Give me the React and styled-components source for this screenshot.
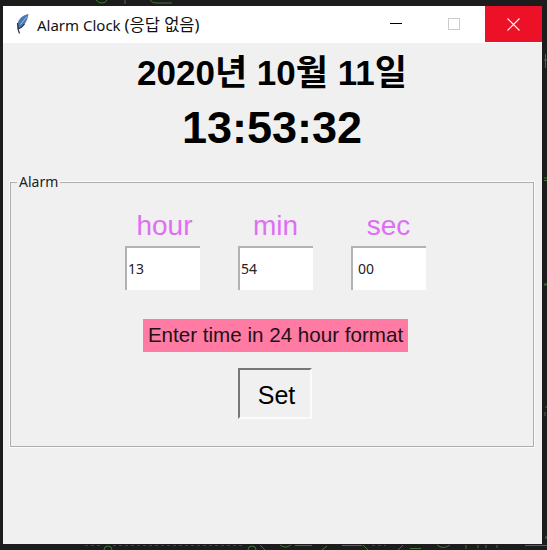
import React from "react";
import styled, { createGlobalStyle } from "styled-components";

const GlobalStyle = createGlobalStyle`
  html, body {
    margin: 0;
    padding: 0;
    background: #1c1c1c;
  }
`;

const sans = `"Liberation Sans", "Noto Sans CJK KR", sans-serif`;
const uiSans = `"Noto Sans", "Noto Sans CJK KR", sans-serif`;

const Desktop = styled.div`
  position: relative;
  width: 547px;
  height: 550px;
  box-sizing: border-box;
  padding: 6px 5px 6px 3px;
  background: #1c1c1c;
  overflow: hidden;
`;

// bits of the code editor showing round the window
const BehindCode = styled.svg`
  position: absolute;
  left: 0;
  top: 0;
  width: 547px;
  height: 550px;
`;

const Window = styled.div`
  position: relative;
  height: 538px;
  display: flex;
  flex-direction: column;
  background: #f0f0f0;
  font-family: ${sans};
`;

const TitleBar = styled.div`
  height: 37px;
  flex: none;
  display: flex;
  align-items: flex-start;
  background: #fff;
`;

const Feather = styled.svg`
  width: 16px;
  height: 20px;
  margin: 8px 0 0 13px;
  flex: none;
`;

const TitleText = styled.div`
  margin: 9px 0 0 5px;
  font-family: ${uiSans};
  font-size: 15px;
  line-height: 20px;
  color: #111;
  white-space: nowrap;
  flex: 1;
`;

const TitleStatus = styled.span`
  font-size: 16.5px;
`;

const WinButton = styled.div`
  width: ${(p) => p.$w}px;
  height: 36px;
  flex: none;
  display: flex;
  align-items: center;
  justify-content: center;
  background: ${(p) => (p.$close ? "#ec1126" : "transparent")};
`;

const Body = styled.div`
  flex: 1;
  display: flex;
  flex-direction: column;
  align-items: stretch;
  padding: 0 8px 0 7px;
`;

const DateLine = styled.div`
  height: 58px;
  line-height: 60px;
  font-size: 35px;
  font-weight: 700;
  color: #000;
  text-align: center;
  white-space: nowrap;
`;

const TimeLine = styled.div`
  height: 52px;
  line-height: 54px;
  font-size: 45px;
  font-weight: 700;
  color: #000;
  text-align: center;
`;

const AlarmBox = styled.fieldset`
  margin: 21px 0 0;
  padding: 0;
  height: 273px;
  box-sizing: border-box;
  border: 1px solid #adadad;
  box-shadow: 0 0 0 1px #fbfbfb;
  display: flex;
  flex-direction: column;
  align-items: center;
`;

const BoxTitle = styled.legend`
  margin-left: 6px;
  padding: 0 2px;
  font-family: ${uiSans};
  font-size: 14px;
  line-height: 16px;
  color: #222;
`;

const Fields = styled.div`
  display: flex;
  gap: 38px;
  margin-top: 18px;
  margin-left: 7px;
`;

const Field = styled.div`
  width: 75px;
  display: flex;
  flex-direction: column;
  align-items: center;
`;

const FieldLabel = styled.div`
  font-size: 28px;
  line-height: 36px;
  margin-bottom: 2px;
  color: #df6ff2;
  margin-left: ${(p) => p.$shift || 0}px;
`;

const TimeInput = styled.input`
  width: 75px;
  height: 44px;
  box-sizing: border-box;
  border: 0;
  border-top: 2px solid #b2b2b2;
  border-left: 2px solid #b2b2b2;
  outline: 0;
  background: #fff;
  padding: 0 0 2px ${(p) => p.$pad || 1}px;
  font-family: ${uiSans};
  font-size: 14px;
  color: #222;
`;

const Notice = styled.div`
  margin-top: 29px;
  margin-left: 7px;
  width: 265px;
  height: 33px;
  box-sizing: border-box;
  background: #ff7ba3;
  font-size: 20.6px;
  line-height: 31px;
  color: #231018;
  text-align: center;
  white-space: nowrap;
`;

const SetButton = styled.button`
  margin-top: 16px;
  margin-left: 5px;
  width: 74px;
  height: 51px;
  box-sizing: border-box;
  padding: 4px 0 0 4px;
  background: #f0f0f0;
  border: 2px solid;
  border-color: #777 #fbfbfb #fbfbfb #777;
  font-family: ${sans};
  font-size: 25px;
  color: #000;
`;

function App() {
  return (
    <Desktop>
      <GlobalStyle />
      <BehindCode viewBox="0 0 547 550">
        <g fill="none" stroke="#3f7534" strokeWidth="1">
          <path d="M96 0 Q98 3 102 3 Q106 3 107 0 M125 0 V4 M150 0 Q152 3 156 3 H172" />
          <path d="M104 550 Q104 546 108 546 Q112 546 112 550 M248 550 Q248 546 252 546 Q256 546 256 550 M260 545 L265 550 M280 545 Q285 549 291 545 M295 545.5 H312 M322 550 L327 546 M342 545.5 H362 M363 545 L368 550 M398 550 L403 545 M410 548.5 H421 M437 545 Q443 550 450 545 M466 545 V549 M478 545 V548 M486 545 V548 M497 545 V548 M525 545.5 H547" />
          <path d="M85 545.5 H100 M113 545.5 H245 M372 545.5 H386" strokeDasharray="3 3" opacity="0.6" />
          <path d="M545.5 54 V68 M544 60 H547 M544 178 H547 M544 180.5 H547 M544 284 H547 M544 285 H547 M545 407 H547 M545 412 V416 M545 537 H547 M545 538 H547" />
        </g>
      </BehindCode>
      <Window>
        <TitleBar>
          <Feather viewBox="0 0 16 20">
            <path d="M12.5 0 C7 1 2 5 1.5 10 L2 15 C7.5 14 11.5 7 12.5 0 Z" fill="#4c79ad" />
            <path d="M11 2.5 L4.5 10.5" stroke="#9cc0e6" strokeWidth="1" fill="none" />
            <path d="M1.5 9 L2 15 L3.5 19.5 M2 15 C5 14 7 12 8.5 10" stroke="#23303f" strokeWidth="1.2" fill="none" />
          </Feather>
          <TitleText>Alarm Clock <TitleStatus>(응답 없음)</TitleStatus></TitleText>
          <WinButton $w={54}>
            <svg width="12" height="2" viewBox="0 0 12 2">
              <rect width="12" height="1" fill="#000" />
            </svg>
          </WinButton>
          <WinButton $w={62}>
            <svg width="12" height="12" viewBox="0 0 12 12">
              <rect x="0.5" y="0.5" width="11" height="11" fill="none" stroke="#ccc" />
            </svg>
          </WinButton>
          <WinButton $w={57} $close>
            <svg width="13" height="13" viewBox="0 0 13 13">
              <path d="M0.5 0.5 L12.5 12.5 M12.5 0.5 L0.5 12.5" stroke="#fff" strokeWidth="1.1" />
            </svg>
          </WinButton>
        </TitleBar>
        <Body>
          <DateLine>2020년 10월 11일</DateLine>
          <TimeLine>13:53:32</TimeLine>
          <AlarmBox>
            <BoxTitle>Alarm</BoxTitle>
            <Fields>
              <Field>
                <FieldLabel $shift={4}>hour</FieldLabel>
                <TimeInput defaultValue="13" $pad={1} />
              </Field>
              <Field>
                <FieldLabel>min</FieldLabel>
                <TimeInput defaultValue="54" $pad={1} />
              </Field>
              <Field>
                <FieldLabel>sec</FieldLabel>
                <TimeInput defaultValue="00" $pad={5} />
              </Field>
            </Fields>
            <Notice>Enter time in 24 hour format</Notice>
            <SetButton>Set</SetButton>
          </AlarmBox>
        </Body>
      </Window>
    </Desktop>
  );
}

export default App;
